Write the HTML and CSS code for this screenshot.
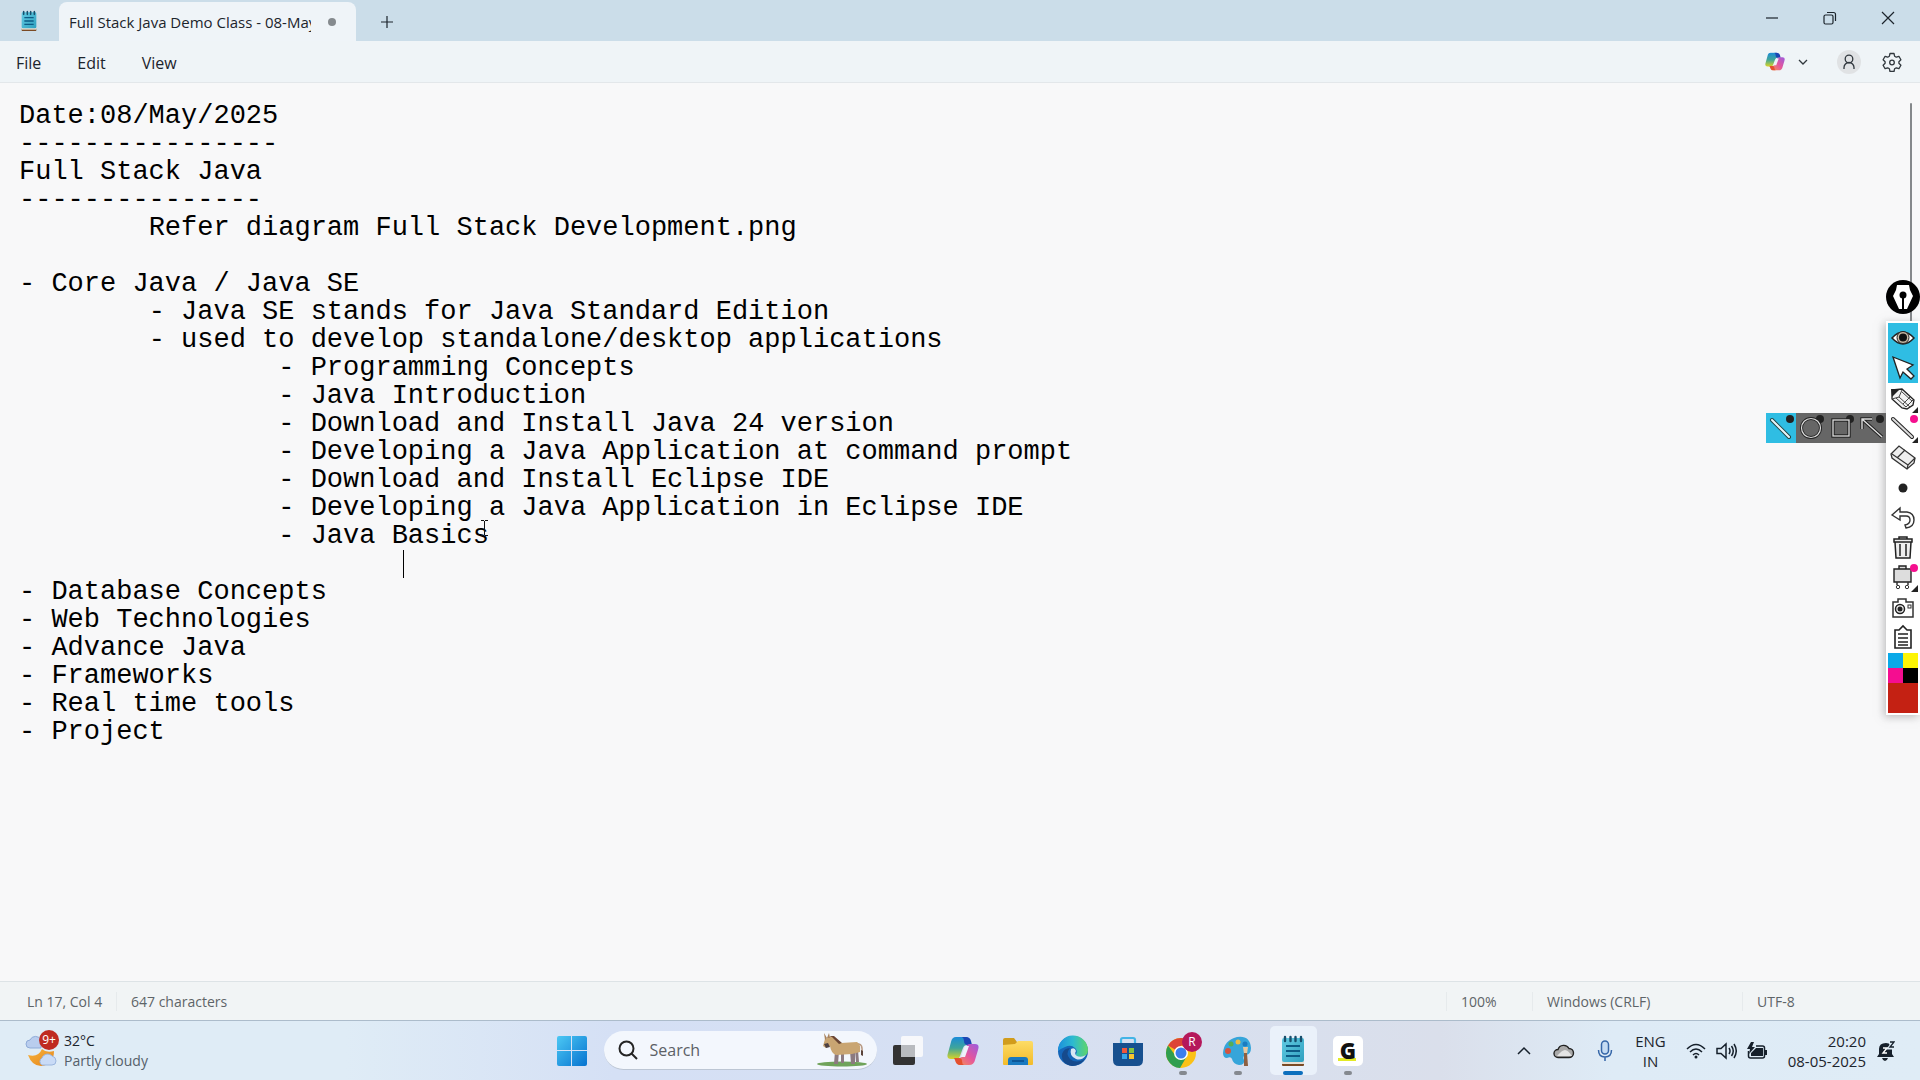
FILE: index.html
```html
<!DOCTYPE html>
<html lang="en">
<head>
  <meta charset="UTF-8" />
  <meta name="viewport" content="width=device-width, initial-scale=1.0" />
  <title>Full Stack Java Demo Class - 08-May</title>
  <link rel="stylesheet" href="styles.css">
</head>
<body>
  <!-- shared gradients and icons -->
  <svg class="defs" width="0" height="0" aria-hidden="true">
    <defs>
      <linearGradient id="win" x1="0" y1="0" x2="1" y2="1"><stop offset="0" stop-color="#4cc8f4"/><stop offset="1" stop-color="#0673d0"/></linearGradient>
      <linearGradient id="cpBlue" x1="0" y1="0" x2="0" y2="1"><stop offset="0" stop-color="#1b8bd8"/><stop offset=".5" stop-color="#3fa59a"/><stop offset="1" stop-color="#d9d426"/></linearGradient>
      <linearGradient id="cpPink" x1="1" y1="0" x2="0" y2="1"><stop offset="0" stop-color="#9a5be0"/><stop offset=".5" stop-color="#e5569c"/><stop offset="1" stop-color="#f79a4c"/></linearGradient>
      <linearGradient id="pad" x1="0" y1="0" x2="1" y2="1"><stop offset="0" stop-color="#62cbe3"/><stop offset="1" stop-color="#2fa0bf"/></linearGradient>
      <linearGradient id="edgeTop" x1="0" y1="0" x2="1" y2="0"><stop offset="0" stop-color="#1c8fdc"/><stop offset=".5" stop-color="#2dbad0"/><stop offset="1" stop-color="#5fd668"/></linearGradient>
      <linearGradient id="folder" x1="0" y1="0" x2="0" y2="1"><stop offset="0" stop-color="#fddc66"/><stop offset="1" stop-color="#f3bb2a"/></linearGradient>
      <linearGradient id="moon" x1="0" y1="0" x2="1" y2="1"><stop offset="0" stop-color="#f7b23c"/><stop offset="1" stop-color="#e5861c"/></linearGradient>
    </defs>
    <symbol id="notepad" viewBox="0 0 24 32">
      <rect x="1" y="27" width="22" height="4" rx="1" fill="#7a4a24"/>
      <rect x="1" y="26" width="22" height="3" fill="#e8e0d4"/>
      <rect x="1" y="3" width="22" height="24" rx="2" fill="url(#pad)"/>
      <path d="M5 11h14M5 16h14M5 21h14" stroke="#0d5c86" stroke-width="2"/>
      <path d="M4 2v4M9.500 2v4M14.500 2v4M20 2v4" stroke="#174f6d" stroke-width="2.400" stroke-linecap="round"/>
    </symbol>
    <symbol id="copilot" viewBox="0 0 32 30">
      <path d="M9 1h9q4 0 5 4l1 4h-4q-3 0-4 3l-3 8q-1 3-4 3H4q-5 0-3-6L4 6q1-5 5-5z" fill="url(#cpBlue)"/>
      <path d="M17 1h2q4 0 5 4l1 4h-4q-4 0-4-4 0-3-2-4z" fill="#1b46b4"/>
      <path d="M23 29h-9q-4 0-5-4l-1-3h4q3 0 4-3l3-8q1-3 4-3h5q5 0 3 6l-3 10q-1 5-6 5z" fill="url(#cpPink)"/>
      <path d="M15 29h-2q-4 0-5-5l-1-2h5q3 0 3 3 0 3 2 4z" fill="#e4502f"/>
      <path d="M18 10h4l-4 11h-4z" fill="#eef2fa"/>
    </symbol>
  </svg>

  <div class="window">
    <header class="titlebar">
      <svg class="app-icon" viewBox="0 0 24 32"><use href="#notepad"/></svg>
      <div class="tab">
        <span class="tab-title">Full Stack Java Demo Class - 08-May</span>
        <span class="unsaved"></span>
      </div>
      <button class="new-tab" aria-label="New tab">
        <svg width="14" height="14" viewBox="0 0 14 14"><path d="M7 1v12M1 7h12"/></svg>
      </button>
      <div class="window-buttons">
        <button aria-label="Minimize"><svg width="14" height="14" viewBox="0 0 14 14"><path d="M1 7h12"/></svg></button>
        <button aria-label="Restore"><svg width="14" height="14" viewBox="0 0 14 14"><rect x="1" y="4" width="9" height="9" rx="1.500"/><path d="M4 1.500h6.500a2 2 0 0 1 2 2V10"/></svg></button>
        <button aria-label="Close"><svg width="14" height="14" viewBox="0 0 14 14"><path d="M1 1l12 12M13 1L1 13"/></svg></button>
      </div>
    </header>

    <nav class="menubar">
      <button class="menu">File</button>
      <button class="menu">Edit</button>
      <button class="menu">View</button>
      <div class="menu-right">
        <button class="copilot-btn" aria-label="Copilot">
          <svg width="20" height="19" viewBox="0 0 32 30"><use href="#copilot"/></svg>
          <svg class="line" width="10" height="6" viewBox="0 0 10 6"><path d="M1 1l4 4 4-4"/></svg>
        </button>
        <button class="account" aria-label="Account">
          <svg class="line" width="14" height="16" viewBox="0 0 14 16"><circle cx="7" cy="5" r="3.800"/><path d="M2 15v-1.500a5 5 0 0 1 10 0V15"/></svg>
        </button>
        <button class="settings" aria-label="Settings">
          <svg class="line" width="20" height="20" viewBox="0 0 20 20"><path d="M8 1.500h4l.6 2.700 1.700 1 2.600-.9 2 3.500-2 1.900v1.600l2 1.900-2 3.500-2.600-.9-1.700 1-.6 2.700H8l-.6-2.700-1.700-1-2.600.9-2-3.500 2-1.900V9.700l-2-1.900 2-3.500 2.600.9 1.700-1z" stroke-linejoin="round"/><circle cx="10" cy="10.500" r="2.300"/></svg>
        </button>
      </div>
    </nav>

    <main class="editor">
      <textarea class="text" aria-label="Text editor" spellcheck="false" wrap="off">
Date:08/May/2025
----------------
Full Stack Java
---------------
	Refer diagram Full Stack Development.png

- Core Java / Java SE
	- Java SE stands for Java Standard Edition
	- used to develop standalone/desktop applications
		- Programming Concepts
		- Java Introduction
		- Download and Install Java 24 version
		- Developing a Java Application at command prompt
		- Download and Install Eclipse IDE
		- Developing a Java Application in Eclipse IDE
		- Java Basics
			
- Database Concepts
- Web Technologies
- Advance Java
- Frameworks
- Real time tools
- Project</textarea>
      <span class="caret"></span>
      <svg class="ibeam" width="7" height="16" viewBox="0 0 7 16"><path d="M0 .5h3M4 .5h3M3.500 1v14M0 15.500h3M4 15.500h3"/></svg>
      <span class="scroll-thumb"></span>
    </main>

    <footer class="statusbar">
      <span class="status position">Ln 17, Col 4</span>
      <span class="status characters">647 characters</span>
      <span class="status zoom">100%</span>
      <span class="status endings">Windows (CRLF)</span>
      <span class="status encoding">UTF-8</span>
    </footer>
  </div>

  <!-- screen annotation tools -->
  <aside class="annotate">
    <button class="pen-badge" aria-label="Hide tools">
      <svg width="34" height="34" viewBox="0 0 34 34"><circle cx="17" cy="17" r="17" fill="#000"/><path d="M11 5h12l1 5 3 6-6 13h-8L7 16l3-6z" fill="#fff"/><path d="M17 16v14" stroke="#000" stroke-width="2"/><circle cx="17" cy="15" r="3.500" fill="#000"/></svg>
    </button>
    <div class="tools">
      <button class="tool on" aria-label="Show"><svg viewBox="0 0 30 30"><path d="M4 15Q15 3 26 15 15 27 4 15z" fill="#fff" stroke="#222" stroke-width="1.500"/><circle cx="15" cy="14.500" r="6" fill="#c9b9a5" stroke="#222"/><circle cx="15" cy="14.500" r="4" fill="#111"/></svg></button>
      <button class="tool on" aria-label="Select"><svg viewBox="0 0 30 30"><path d="M5 4l20 8-6 4 7 7-3 3-8-7-3 6z" fill="#fff" stroke="#222" stroke-width="1.300"/></svg></button>
      <button class="tool" aria-label="Pencil"><svg viewBox="0 0 30 30"><path d="M4 7l10-1 12 11-1 5-6 4-5-1L4 16z" fill="#f2f2f2" stroke="#222" stroke-width="1.300"/><path d="M3 6l9 0-8 8zM30 24v6h-6z" fill="#222"/><path d="M4 16l7-2 3-7M11 14l11 10M8 15l10 9M14 9l10 9M15 21l7-7M18 24l7-7" fill="none" stroke="#444"/></svg></button>
      <button class="tool" aria-label="Line"><svg viewBox="0 0 30 30"><path d="M5 6l19 18" stroke="#222" stroke-width="4" stroke-linecap="round"/><path d="M5 6l19 18" stroke="#ddd" stroke-width="2" stroke-linecap="round"/><circle cx="26" cy="6" r="4" fill="#f5108f"/><path d="M30 24v6h-6z" fill="#222"/></svg></button>
      <button class="tool" aria-label="Eraser"><svg viewBox="0 0 30 30"><path d="M3 11l8-8 16 12-1 5-7 6L4 15z" fill="#eee" stroke="#333" stroke-width="1.300"/><path d="M4 11l16 11 7-7M20 22l-1 4M9 15l8-8" fill="none" stroke="#333" stroke-width="1.200"/></svg></button>
      <button class="tool" aria-label="Size"><svg viewBox="0 0 30 30"><circle cx="15" cy="15" r="4.500" fill="#222"/></svg></button>
      <button class="tool" aria-label="Undo"><svg viewBox="0 0 30 30"><path d="M4 12l8-7v4h7q7 1 7 8t-8 8l-1-3q5-1 5-5t-4-4h-6v4z" fill="#fff" stroke="#333" stroke-width="1.400"/></svg></button>
      <button class="tool" aria-label="Delete"><svg viewBox="0 0 30 30"><path d="M7 9h16l-1 16H8zM6 6h18v3H6zM11 4h8v2h-8z" fill="#eee" stroke="#222" stroke-width="1.500"/><path d="M12 11v12M18 11v12" stroke="#222" stroke-width="1.500"/></svg></button>
      <button class="tool" aria-label="Board"><svg viewBox="0 0 30 30"><path d="M6 6h17v13H6zM11 3h7v3h-7z" fill="#ddd" stroke="#222" stroke-width="1.400"/><path d="M9 19v3M20 19v3" stroke="#333" stroke-width="1.500"/><circle cx="10" cy="24" r="1.700" fill="#fff" stroke="#333"/><circle cx="19" cy="24" r="1.700" fill="#fff" stroke="#333"/><circle cx="26" cy="5" r="4" fill="#f5108f"/><path d="M30 22v7h-7z" fill="#222"/></svg></button>
      <button class="tool" aria-label="Screenshot"><svg viewBox="0 0 30 30"><path d="M5 9h5V6h8v3h7v15H5z" fill="#fff" stroke="#333" stroke-width="1.500"/><circle cx="12" cy="16" r="4.500" fill="#eee" stroke="#222" stroke-width="1.500"/><circle cx="12" cy="16" r="2.500" fill="#222"/><rect x="20" y="12" width="3" height="3" fill="none" stroke="#333"/></svg></button>
      <button class="tool" aria-label="Clipboard"><svg viewBox="0 0 30 30"><path d="M7 7h4l4-4 4 4h4v18H7z" fill="#fff" stroke="#222" stroke-width="1.600"/><path d="M10 11h10M10 15h10M10 19h10M10 22h10" stroke="#222" stroke-width="1.500"/></svg></button>
      <div class="swatches">
        <button class="swatch cyan" aria-label="Cyan"></button>
        <button class="swatch yellow" aria-label="Yellow"></button>
        <button class="swatch pink" aria-label="Pink"></button>
        <button class="swatch black" aria-label="Black"></button>
        <button class="swatch red" aria-label="Red"></button>
      </div>
    </div>
    <div class="shapes">
      <button class="shape on" aria-label="Line"><svg viewBox="0 0 30 30"><path d="M6 7l17 17" stroke="#244" stroke-width="4" stroke-linecap="round"/><path d="M6 7l17 17" stroke="#e8f6fa" stroke-width="2" stroke-linecap="round"/><circle cx="24" cy="6" r="4" fill="#222"/></svg></button>
      <button class="shape" aria-label="Ellipse"><svg viewBox="0 0 30 30"><circle cx="24" cy="6" r="4" fill="#222"/><circle cx="15" cy="15" r="9.500" fill="none" stroke="#222" stroke-width="3"/><circle cx="15" cy="15" r="9.500" fill="none" stroke="#ddd" stroke-width="1.200"/></svg></button>
      <button class="shape" aria-label="Rectangle"><svg viewBox="0 0 30 30"><circle cx="24" cy="6" r="4" fill="#222"/><rect x="7" y="7" width="16" height="16" fill="none" stroke="#222" stroke-width="3.400"/><rect x="7" y="7" width="16" height="16" fill="none" stroke="#ddd" stroke-width="1.300"/></svg></button>
      <button class="shape" aria-label="Arrow"><svg viewBox="0 0 30 30"><circle cx="24" cy="6" r="4" fill="#222"/><path d="M16 6H6v10M6 6l20 18" fill="none" stroke="#222" stroke-width="3.400"/><path d="M16 6H6v10M6 6l20 18" fill="none" stroke="#ddd" stroke-width="1.400"/></svg></button>
    </div>
  </aside>

  <div class="taskbar">
    <a class="weather" href="#">
      <svg width="36" height="36" viewBox="0 0 36 36"><path d="M6 15a4 4 0 0 1 0-8 6 6 0 0 1 11 0v8z" fill="#b9cdee" stroke="#8fabd8"/><path d="M4 22q10 3 14-6 4 4 12 2 0 14-13 15-9 0-13-11z" fill="url(#moon)"/><path d="M18 32a4 4 0 0 1 0-7 6 6 0 0 1 10-2q4 1 4 5t-4 4z" fill="#c9dbf6" stroke="#9cb6de"/></svg>
      <span class="badge">9+</span>
      <span class="weather-text"><b>32°C</b><span>Partly cloudy</span></span>
    </a>

    <div class="pinned">
      <button class="task start" aria-label="Start"><svg width="30" height="30" viewBox="0 0 30 30"><path d="M0 2q0-2 2-2h12v14H0zM15 0h13q2 0 2 2v12H15zM0 15h14v15H2q-2 0-2-2zM15 15h15v13q0 2-2 2H15z" fill="url(#win)"/></svg></button>
      <label class="search">
        <svg width="20" height="20" viewBox="0 0 20 20"><circle cx="8.500" cy="8.500" r="7"/><path d="M13.500 13.500L19 19"/></svg>
        <input type="text" placeholder="Search" aria-label="Search">
        <svg class="donkey" width="50" height="34" viewBox="0 0 50 34"><ellipse cx="25" cy="31" rx="25" ry="2.500" fill="#6fa35a"/><path d="M41 11q5-1 4 10" fill="none" stroke="#b89a83" stroke-width="1.500"/><path d="M44 17l2 1v5l-2-1z" fill="#5b443b"/><path d="M18 18h4l-1 13h-4zM24 19h3v11h-3zM33 18h5v13h-4zM38 17h3l1 12h-3z" fill="#8c7a80"/><path d="M8 6l7-3 9 7 16-1q4 2 3 10l-8 2-16 1q-5-2-6-9l-4 2-3-2z" fill="#c9a572"/><path d="M12 3l5 0 8 7-3 1-7-7z" fill="#6a4635"/><path d="M7 0l3 5-2 2zM12 0l1 5-3 0z" fill="#a8825c"/><path d="M7 11l4-1 2 4-4 1z" fill="#4d4143"/></svg>
      </label>
      <button class="task" aria-label="Task view"><svg width="32" height="32" viewBox="0 0 32 32"><rect x="9" y="1" width="22" height="21" rx="2" fill="#f7f8fb"/><rect x="1" y="10" width="22" height="20" rx="2" fill="#333"/><path d="M9 10h14v12H9z" fill="#b9bbbf"/></svg></button>
      <button class="task" aria-label="Copilot"><svg width="32" height="30" viewBox="0 0 32 30"><use href="#copilot"/></svg></button>
      <button class="task" aria-label="File Explorer"><svg width="32" height="30" viewBox="0 0 32 30"><path d="M1 4q0-2 2-2h9l3 4v5H1z" fill="#d19c1c"/><path d="M1 9l12-1 3-3h13q2 0 2 2v21q0 1-1 1H2q-1 0-1-1z" fill="url(#folder)"/><path d="M6 29v-5q0-3 3-3h14q3 0 3 3v5z" fill="#1979c0"/><path d="M10 25h12" stroke="#0c5798" stroke-width="2"/></svg></button>
      <button class="task" aria-label="Edge"><svg width="32" height="32" viewBox="0 0 32 32"><circle cx="16" cy="16" r="15" fill="#1565b8"/><path d="M1 16A15 15 0 0 1 31 15q0 7-8 7-5 0-4-3 2-3-1-6-4-4-10-1-5 2-7 4z" fill="url(#edgeTop)"/><path d="M13 13q-5 6 0 11 6 5 15 0-5 7-13 7Q4 29 5 19q2-6 8-6z" fill="#164a8c"/><path d="M14 14q4-2 5 2-2 3 1 5 4 2 9-1-4 6-10 4-7-3-5-10z" fill="#d8e7f4"/></svg></button>
      <button class="task" aria-label="Microsoft Store"><svg width="30" height="32" viewBox="0 0 30 32"><path d="M8 9V5q0-2 2-2h10q2 0 2 2v4" fill="none" stroke="#43b4e6" stroke-width="2.200"/><path d="M0 8h30v17q0 6-6 6H6q-6 0-6-6z" fill="#17508f"/><path d="M9 13h5v5H9z" fill="#f0563b"/><path d="M16 13h5v5h-5z" fill="#86c440"/><path d="M9 19h5v5H9z" fill="#39a5e8"/><path d="M16 19h5v5h-5z" fill="#fbc62f"/></svg></button>
      <button class="task running" aria-label="Chrome"><svg width="38" height="38" viewBox="0 0 38 38"><circle cx="17" cy="21" r="15" fill="#fbc116"/><path d="M17 21L4 13.500A15 15 0 0 1 30 13.500H17z" fill="#dd4436"/><path d="M4 13.500A15 15 0 0 0 16 36l7-12-12-1z" fill="#2f9e4f"/><circle cx="17" cy="21" r="7" fill="#fff"/><circle cx="17" cy="21" r="5.500" fill="#3b7ded"/><circle cx="28" cy="10" r="10" fill="#b5185b"/><text x="28" y="14" text-anchor="middle">R</text></svg></button>
      <button class="task running" aria-label="Paint"><svg width="32" height="32" viewBox="0 0 32 32"><path d="M15 2Q28 0 29 13q0 6-5 7-4 1-2 5 1 5-5 5-6-1-7-6-1-3-5-1-4 0-4-5Q2 5 15 2z" fill="#36a5da"/><circle cx="6" cy="16" r="3" fill="#d25440"/><circle cx="9" cy="9" r="2.500" fill="#55ad55"/><circle cx="16" cy="7" r="2.500" fill="#eebc42"/><circle cx="23" cy="9" r="2.500" fill="#1b7cc0"/><path d="M21 12h5l-1 7h-3z" fill="#e8c8a0"/><path d="M22 18h3l1 13h-4z" fill="#8e6041"/></svg></button>
      <button class="task active" aria-label="Notepad"><svg width="24" height="32" viewBox="0 0 24 32"><use href="#notepad"/></svg></button>
      <button class="task running" aria-label="G app"><span class="g-tile">G</span></button>
    </div>

    <div class="tray">
      <button class="tray-btn" aria-label="Show hidden icons"><svg class="stroke" width="14" height="9" viewBox="0 0 14 9"><path d="M1 8l6-6 6 6"/></svg></button>
      <button class="tray-btn" aria-label="OneDrive"><svg width="22" height="16" viewBox="0 0 22 16"><path d="M5 14.500a4 4 0 0 1 0-8 6 6 0 0 1 11-1 4.500 4.500 0 0 1 0 9z" fill="#aaa" stroke="#222" stroke-width="1.400"/><path d="M4 13q5-6 8-6t7 6z" fill="#e4e4e4"/></svg></button>
      <button class="tray-btn" aria-label="Microphone"><svg width="16" height="22" viewBox="0 0 16 22" fill="none" stroke="#3566a8" stroke-width="1.500"><rect x="4.500" y="1" width="7" height="13" rx="3.500" fill="#c4dbf3"/><path d="M1.500 10q0 7 6.500 7t6.500-7M8 17v4"/></svg></button>
      <button class="language"><span>ENG</span><span>IN</span></button>
      <button class="quick" aria-label="Network, volume and battery">
        <svg class="stroke" width="20" height="16" viewBox="0 0 20 16"><path d="M1 6q9-9 18 0M4 9q6-6 12 0M7 12q3-3 6 0"/><circle cx="10" cy="14" r="1.500" fill="#16202b" stroke="none"/></svg>
        <svg class="stroke" width="21" height="18" viewBox="0 0 21 18"><path d="M1 6.500h4L10 2v14l-5-4.500H1zM13 6q2 3 0 6M15.500 4q3.500 5 0 10M18 2q4.500 7 0 14"/></svg>
        <svg width="21" height="18" viewBox="0 0 21 18"><path d="M1.500 9v5q0 2 2 2h12q2 0 2-2V6q0-2-2-2H9" fill="none" stroke="#16202b" stroke-width="1.500"/><path d="M4 14v-3l5-5h7v8zM18 8h2v5h-2zM4 0L0 7h3l-1 5 6-7H5l2-5z" fill="#16202b"/></svg>
      </button>
      <button class="clock"><span>20:20</span><span>08-05-2025</span></button>
      <button class="tray-btn" aria-label="Notifications"><svg width="18" height="20" viewBox="0 0 18 20"><path d="M2 13V8q0-6 7-6 6 0 6 6v5l2 3H0zM5 17h6q-1 3-3 3t-3-3z" fill="#16202b"/><path d="M6 7h4l-4 5h4" fill="none" stroke="#fff" stroke-width="1.400"/><path d="M12 2h4l-4 5h4" fill="none" stroke="#dfecf6" stroke-width="3"/><path d="M13 1h4l-4 5h4" fill="none" stroke="#16202b" stroke-width="1.300"/></svg></button>
    </div>
  </div>
</body>
</html>
```

FILE: styles.css
```css
* {
  box-sizing: border-box;
  margin: 0;
  padding: 0;
}
body {
  height: 100vh;
  display: flex;
  flex-direction: column;
  overflow: hidden;
  font-family: 'Open Sans', 'Noto Sans', sans-serif;
  font-size: 15px;
  color: #1c242c;
}
button {
  background: none;
  border: none;
  font: inherit;
  color: inherit;
}
svg {
  display: block;
}
.defs {
  position: absolute;
}
.window {
  flex: 1;
  min-height: 0;
  display: flex;
  flex-direction: column;
  background: #f8f8f9;
}

/* title bar */
.titlebar {
  height: 41px;
  display: flex;
  align-items: flex-end;
  background: #cbdde9;
}
.app-icon {
  width: 16px;
  height: 22px;
  margin: 0 22px 9px 21px;
}
.tab {
  width: 297px;
  height: 39px;
  padding: 0 20px 0 10px;
  display: flex;
  align-items: center;
  justify-content: space-between;
  background: #eff4f8;
  border-radius: 8px 8px 0 0;
}
.tab-title {
  width: 242px;
  overflow: hidden;
  white-space: nowrap;
  font-size: 15px;
}
.unsaved {
  width: 8px;
  height: 8px;
  border-radius: 50%;
  background: #858a8e;
}
.new-tab {
  height: 39px;
  padding: 0 24px;
}
.titlebar button svg {
  fill: none;
  stroke: #1c242c;
  stroke-width: 1.2;
}
.window-buttons {
  margin-left: auto;
  margin-right: 3px;
  display: flex;
}
.window-buttons button {
  width: 58px;
  height: 41px;
  padding: 0 22px 5px;
}

/* menu bar */
.menubar {
  height: 42px;
  display: flex;
  align-items: center;
  padding: 0 18px 0 4px;
  background: #eff4f7;
  border-bottom: 1px solid #e3e7ea;
}
.menu {
  padding: 2px 12px 0;
  margin-right: 12px;
  font-size: 16px;
}
.menu-right {
  margin-left: auto;
  display: flex;
  align-items: center;
}
.copilot-btn {
  display: flex;
  align-items: center;
  gap: 13px;
}
.line {
  fill: none;
  stroke: #30373d;
  stroke-width: 1.3;
}
.account {
  width: 24px;
  height: 24px;
  padding: 4px 5px;
  margin: 0 21px 0 29px;
  border-radius: 50%;
  background: #e0e2e4;
}

/* editor */
.editor {
  flex: 1;
  min-height: 0;
  position: relative;
  display: flex;
}
.text {
  flex: 1;
  padding: 19px 40px 0 19px;
  border: none;
  outline: none;
  resize: none;
  overflow: hidden;
  background: transparent;
  color: #000;
  font-family: 'Liberation Mono', monospace;
  font-size: 27px;
  line-height: 28px;
  tab-size: 8;
  white-space: pre;
}
.caret {
  position: absolute;
  left: 403px;
  top: 467px;
  width: 1px;
  height: 28px;
  background: #000;
}
.ibeam {
  position: absolute;
  left: 481px;
  top: 437px;
  stroke: #111;
}
.scroll-thumb {
  position: absolute;
  right: 8px;
  top: 20px;
  width: 2px;
  height: 600px;
  border-radius: 1px;
  background: #85888b;
}

/* status bar */
.statusbar {
  height: 40px;
  display: flex;
  align-items: center;
  border-top: 1px solid #dde3e6;
  border-bottom: 1px solid #acbccb;
  background: #f1f4f5;
  color: #5e6468;
  font-size: 14px;
}
.status {
  border-left: 1px solid #e6eaec;
  padding-left: 14px;
}
.position {
  width: 116px;
  padding-left: 27px;
  border: none;
}
.zoom {
  width: 86px;
  margin-left: auto;
}
.endings {
  width: 210px;
}
.encoding {
  width: 178px;
}

/* annotation tools */
.annotate {
  position: absolute;
  right: 0;
  top: 280px;
  width: 34px;
}
.annotate button {
  display: block;
}
.tools {
  margin-top: 7px;
  padding: 2px;
  background: #fff;
  box-shadow: -2px 2px 8px #8888;
}
.tool {
  width: 30px;
  height: 30px;
}
.tool.on,
.shape.on {
  background: #2fbde3;
}
.swatches {
  display: grid;
  grid-template-columns: 15px 15px;
}
.swatch {
  height: 15px;
}
.cyan { background: #0aa9e8; }
.yellow { background: #fdf405; }
.pink { background: #f50d90; }
.black { background: #000; }
.red {
  grid-column: span 2;
  height: 30px;
  background: #c42113;
}
.shapes {
  position: absolute;
  right: 34px;
  top: 133px;
  display: flex;
  background: #666;
}
.shape {
  width: 30px;
  height: 30px;
}

/* taskbar */
.taskbar {
  height: 59px;
  display: grid;
  grid-template-columns: 1fr auto 1fr;
  align-items: center;
  background: linear-gradient(90deg, #dfecf6 0%, #dfecf6 18%, #d5e0f5 32%, #d6e0f3 50%, #dadfeb 75%, #deebf6 84%, #dfecf6 100%);
}
.weather {
  position: relative;
  padding-left: 24px;
  display: flex;
  align-items: center;
  gap: 4px;
  color: inherit;
  text-decoration: none;
  font-size: 14px;
  line-height: 20px;
}
.weather b {
  display: block;
  font-weight: 400;
}
.weather-text span {
  color: #55606a;
}
.badge {
  position: absolute;
  left: 39px;
  top: -1px;
  width: 20px;
  height: 20px;
  border-radius: 50%;
  background: #bf2a21;
  color: #fff;
  font-size: 12px;
  text-align: center;
}
.pinned {
  display: flex;
  align-items: center;
}
.task {
  position: relative;
  width: 55px;
  height: 59px;
  display: flex;
  align-items: center;
  justify-content: center;
}
.task text {
  font-size: 12px;
  fill: #fff;
}
.search {
  width: 273px;
  height: 39px;
  margin: 0 4px;
  padding: 0 10px 0 14px;
  display: flex;
  align-items: center;
  gap: 12px;
  border-radius: 20px;
  background: #f3f7fd;
  border-bottom: 1px solid #bcc6d4;
}
.search svg {
  flex: none;
  fill: none;
  stroke: #242424;
  stroke-width: 2;
}
.search .donkey {
  stroke: none;
}
.search input {
  flex: 1;
  min-width: 0;
  border: none;
  outline: none;
  background: none;
  font: inherit;
  font-size: 16px;
}
.search input::placeholder {
  color: #5b6066;
}
.running::after,
.active::after {
  content: '';
  position: absolute;
  bottom: 5px;
  width: 8px;
  height: 4px;
  border-radius: 2px;
  background: #85898f;
}
.active::before {
  content: '';
  position: absolute;
  inset: 5px 4px;
  border-radius: 5px;
  background: #eaf1fa;
}
.active svg {
  position: relative;
}
.active::after {
  width: 20px;
  background: #0d6fbd;
}
.g-tile {
  width: 30px;
  height: 30px;
  border-radius: 5px;
  background: linear-gradient(#fff 22px, transparent 22px, transparent 25px, #fff 25px), linear-gradient(90deg, #fff 5px, #e3ea24 5px, #e3ea24 23px, #fff 23px);
  color: #111;
  font-size: 22px;
  font-weight: 800;
  line-height: 28px;
}

/* tray */
.tray {
  display: flex;
  align-items: center;
  justify-content: flex-end;
  padding-right: 25px;
  font-size: 15px;
  line-height: 20px;
}
.tray-btn {
  margin-right: 22px;
}
.tray-btn:last-child {
  margin: 0 0 0 11px;
}
.language,
.clock {
  display: flex;
  flex-direction: column;
  align-items: center;
}
.clock {
  align-items: flex-end;
}
.quick {
  margin: 0 20px;
  display: flex;
  align-items: center;
  gap: 10px;
}
.stroke {
  fill: none;
  stroke: #16202b;
  stroke-width: 1.5;
}
```
